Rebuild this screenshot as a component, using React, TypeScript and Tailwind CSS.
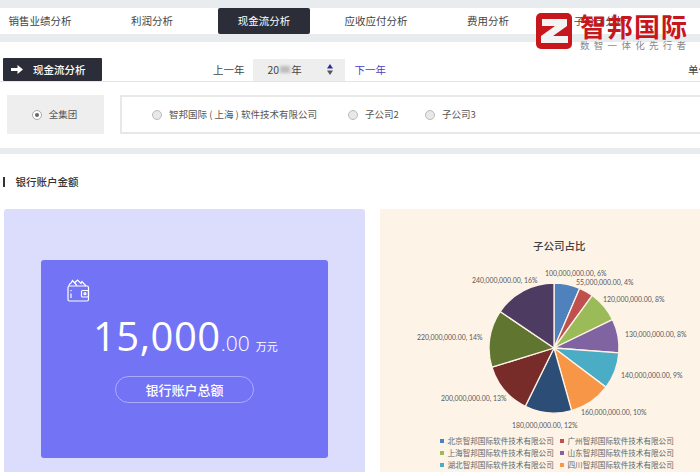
const cjk = "font-['Noto_Sans_CJK_SC','Noto_Sans',sans-serif]"

const tabs = ["销售业绩分析", "利润分析", "现金流分析", "应收应付分析", "费用分析", "子公司分析"]

const slices = [
  { value: 100, color: "#4f81bd", label: "100,000,000.00, 6%", x: 545, y: 273 },
  { value: 55, color: "#c0504d", label: "55,000,000.00, 4%", x: 576, y: 282 },
  { value: 120, color: "#9bbb59", label: "120,000,000.00, 8%", x: 603, y: 299 },
  { value: 130, color: "#8064a2", label: "130,000,000.00, 8%", x: 625, y: 334 },
  { value: 140, color: "#4bacc6", label: "140,000,000.00, 9%", x: 621, y: 375 },
  { value: 160, color: "#f79646", label: "160,000,000.00, 10%", x: 581, y: 412 },
  { value: 180, color: "#2c4d75", label: "180,000,000.00, 12%", x: 512, y: 425 },
  { value: 200, color: "#772c2a", label: "200,000,000.00, 13%", x: 441, y: 398 },
  { value: 220, color: "#5f7530", label: "220,000,000.00, 14%", x: 417, y: 337 },
  { value: 240, color: "#4d3b62", label: "240,000,000.00, 16%", x: 472, y: 280 },
]

const legend = [
  { name: "北京智邦国际软件技术有限公司", color: "#4f81bd" },
  { name: "广州智邦国际软件技术有限公司", color: "#c0504d" },
  { name: "上海智邦国际软件技术有限公司", color: "#9bbb59" },
  { name: "山东智邦国际软件技术有限公司", color: "#8064a2" },
  { name: "湖北智邦国际软件技术有限公司", color: "#4bacc6" },
  { name: "四川智邦国际软件技术有限公司", color: "#f79646" },
]

function Radio({ checked, label, className }: { checked?: boolean; label: string; className?: string }) {
  return (
    <div className={`flex items-center gap-[7px] ${className ?? ""}`}>
      {checked ? (
        <span className="flex h-[10px] w-[10px] items-center justify-center rounded-full border border-[#aaa] bg-white">
          <span className="h-[4px] w-[4px] rounded-full bg-[#666]" />
        </span>
      ) : (
        <span className="h-[10px] w-[10px] rounded-full border border-[#bbb] bg-[#e8e8e8]" />
      )}
      <span className="text-[9.5px] leading-none text-[#555]">{label}</span>
    </div>
  )
}

function Pie() {
  // chart area starts at page x=380, y=209
  const cx = 174
  const cy = 139
  const r = 65
  const total = slices.reduce((s, d) => s + d.value, 0)
  let acc = 0
  const paths = slices.map((d) => {
    const a0 = (acc / total) * Math.PI * 2
    acc += d.value
    const a1 = (acc / total) * Math.PI * 2
    const large = a1 - a0 > Math.PI ? 1 : 0
    const x0 = cx + r * Math.sin(a0)
    const y0 = cy - r * Math.cos(a0)
    const x1 = cx + r * Math.sin(a1)
    const y1 = cy - r * Math.cos(a1)
    return { color: d.color, d: `M${cx} ${cy}L${x0} ${y0}A${r} ${r} 0 ${large} 1 ${x1} ${y1}Z` }
  })
  return (
    <svg width="320" height="224" viewBox="0 0 320 224" className="absolute left-0 top-0">
      {paths.map((p) => (
        <path key={p.color} d={p.d} fill={p.color} stroke="#fdf3e7" strokeWidth="1.3" />
      ))}
      {slices.map((s) => (
        <text
          key={s.label}
          x={s.x - 380}
          y={s.y - 209 + 2.5}
          fontSize="6.9"
          fill="#595959"
          fontFamily="Lato, sans-serif"
        >
          {s.label}
        </text>
      ))}
    </svg>
  )
}

export default function App() {
  return (
    <div className={`relative h-[472px] w-[700px] overflow-hidden bg-white ${cjk}`}>
      <div className="h-2 bg-[#e9ecef]" />
      <div className="-ml-1.5 flex h-[26px] gap-5">
        {tabs.map((t, i) => (
          <div
            key={t}
            className={`flex w-[92px] shrink-0 items-center justify-center rounded-[2px] text-[10.5px] ${
              i === 2 ? "bg-[#2b2e38] text-white" : "text-[#444]"
            }`}
          >
            {t}
          </div>
        ))}
      </div>
      <div className="h-2 bg-[#e9ecef]" />

      {/* year bar */}
      <div className="mt-4 flex h-[24px] w-[760px] items-center border-b border-[#e4e4e4] pl-[3px] text-[10.5px] text-[#444]">
        <div className="flex h-[23px] w-[99px] items-center gap-[10px] rounded-[1px] bg-[#2b2e38] pl-[8px] font-medium text-white">
          <svg width="12" height="9" viewBox="0 0 12 9" fill="white">
            <path d="M0 3h6.5V0L12 4.5 6.5 9V6H0z" />
          </svg>
          现金流分析
        </div>
        <span className="ml-[111px]">上一年</span>
        <div className="ml-2 flex h-[22px] w-[92px] items-center bg-[#eeeeee] pl-[15px] pr-[12px]">
          <span>20</span>
          <span className="mx-[1px] h-[7px] w-[10px] bg-[#bdbdbd] blur-[1.5px]" />
          <span>年</span>
          <svg width="6" height="11" viewBox="0 0 6 11" className="ml-auto">
            <path d="M3 0l3 4.5H0z" fill="#2b2b9e" />
            <path d="M3 11L0 6.5h6z" fill="#555" />
          </svg>
        </div>
        <span className="ml-[10px] text-[#4a3fc4]">下一年</span>
        <span className="ml-[302px]">单位</span>
      </div>

      {/* company filter */}
      <div className="mt-[13px] flex h-[39px] w-[720px] gap-4 pl-[7px]">
        <div className="flex w-[97px] items-center justify-center bg-[#eeeeee] pr-[2px]">
          <Radio checked label="全集团" />
        </div>
        <div className="flex flex-1 items-center border-2 border-[#e8e8e8] pl-[30px]">
          <Radio label="智邦国际 ( 上海 ) 软件技术有限公司" className="w-[196px]" />
          <Radio label="子公司2" className="w-[77px]" />
          <Radio label="子公司3" />
        </div>
      </div>

      <div className="mt-[14px] h-[6px] bg-[#e9ecef]" />

      <div className="ml-[3px] mt-[23px] flex h-[10px] items-center gap-[11px]">
        <span className="h-[10px] w-[1.5px] bg-[#333]" />
        <span className="text-[10.5px] font-medium text-[#333]">银行账户金额</span>
      </div>

      <div className="mt-[22px] flex items-start gap-[15px] pl-1">
        {/* bank total */}
        <div className="h-[280px] w-[361px] shrink-0 rounded-[3px] bg-[#dcdcfd] pl-[37px] pt-[51px]">
          <div className="h-[198px] w-[287px] rounded-[3px] bg-[#7373f5] pt-[19px] text-white">
            <svg width="23" height="23" viewBox="0 0 23 23" fill="none" stroke="white" strokeWidth="1.2" className="ml-[26px]">
              <rect x="1" y="7" width="20.5" height="15" rx="1.5" />
              <path d="M2 7c0-1.5.6-2.5 2-3l1.5-2.5L10 6.5M8 3.5L10.5 1l3.5 3.5L15 2.5 19 7" />
              <rect x="14.5" y="11.5" width="7" height="6.5" rx="1" />
              <circle cx="18" cy="14.7" r="1" />
              <path d="M4 11v1.2M4 14.5V19" />
            </svg>
            <div className="ml-[52px] mt-[14px] flex items-baseline font-['Open_Sans',sans-serif] font-normal leading-none">
              <span className="text-[40px] tracking-[0.5px]">15,000</span>
              <span className="text-[21px] font-light">.00</span>
              <span className={`ml-[6px] text-[11px] ${cjk}`}>万元</span>
            </div>
            <div className="ml-[74px] mt-[20px] flex h-[27px] w-[139px] items-center justify-center rounded-full border border-white/40 text-[13px] font-medium">
              银行账户总额
            </div>
          </div>
        </div>

        {/* subsidiaries pie */}
        <div className="relative h-[280px] w-[320px] shrink-0 bg-[#fdf3e7] pt-[30px]">
          <Pie />
          <div className="relative pl-[153px] text-[10.5px] font-medium leading-[14px] text-[#404040]">子公司占比</div>
          <div className="relative ml-[60px] mt-[184px] grid w-[240px] grid-cols-[120px_120px] gap-y-[4px]">
            {legend.map((l) => (
              <div key={l.name} className="flex items-center gap-[4px] text-[7.6px] leading-[8px] text-[#666]">
                <span className="h-[3.5px] w-[3.5px] shrink-0" style={{ backgroundColor: l.color }} />
                <span className="whitespace-nowrap">{l.name}</span>
              </div>
            ))}
          </div>
        </div>
      </div>

      {/* logo overlay */}
      <div className="absolute left-[536px] top-[13px] flex gap-[8px]">
        <svg width="36" height="36" viewBox="0 0 36 36" className="shrink-0">
          <rect width="36" height="36" rx="5" fill="#c8161d" />
          <path d="M6 6h25v7L17 23h15v7H5v-7L19 13H6z" fill="#f3f3f3" />
        </svg>
        <div className="w-[108px]">
          <div className="whitespace-nowrap text-[26px] font-bold leading-[26px] tracking-[1px] text-[#c8161d]">智邦国际</div>
          <div className="mt-[1px] whitespace-nowrap text-[9.5px] leading-[10px] tracking-[4.3px] text-[#888]">数智一体化先行者</div>
        </div>
      </div>
    </div>
  )
}
